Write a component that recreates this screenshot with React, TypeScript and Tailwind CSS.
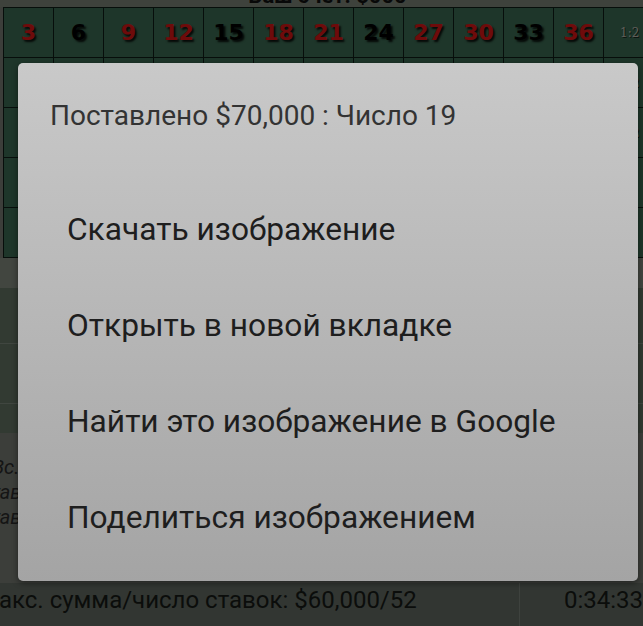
import React from "react";

const topRow = [3, 6, 9, 12, 15, 18, 21, 24, 27, 30, 33, 36];
const midRow = topRow.map((n) => n - 1);
const lowRow = topRow.map((n) => n - 2);
const reds = new Set([1, 3, 5, 7, 9, 12, 14, 16, 18, 19, 21, 23, 25, 27, 30, 32, 34, 36]);

const menuItems = [
  "Скачать изображение",
  "Открыть в новой вкладке",
  "Найти это изображение в Google",
  "Поделиться изображением",
];

function NumberCell({ n }: { n: number }) {
  return (
    <div
      className={
        "flex items-center justify-center border-b border-r border-[#0e1d16] font-['DejaVu_Sans',sans-serif] text-[22px] font-bold [text-shadow:2px_2px_2px_rgba(0,0,0,0.85)] " +
        (reds.has(n) ? "text-[#dc1616]" : "text-black")
      }
    >
      {n}
    </div>
  );
}

function ColumnBet() {
  return (
    <div className="flex items-center justify-start border-b border-r border-[#0e1d16] pl-[16px] font-['DejaVu_Serif',serif] text-[12px] text-[#bcbcb2] [text-shadow:1px_1px_0_rgba(0,0,0,0.6)]">
      1:2
    </div>
  );
}

function OutsideCell({ label, span }: { label: string; span: "col-span-4" | "col-span-2" }) {
  return (
    <div
      className={
        span +
        " flex items-center justify-center border-b border-r border-[#0e1d16] font-['DejaVu_Sans',sans-serif] text-[18px] font-bold text-white [text-shadow:1px_1px_1px_rgba(0,0,0,0.9)]"
      }
    >
      {label}
    </div>
  );
}

function Board() {
  return (
    <div className="ml-[3px] grid w-max grid-cols-[repeat(13,50px)] grid-rows-[repeat(5,50px)] border-l border-t border-[#0e1d16] bg-[#3c6c54]">
      {topRow.map((n) => (
        <NumberCell key={n} n={n} />
      ))}
      <ColumnBet />
      {midRow.map((n) => (
        <NumberCell key={n} n={n} />
      ))}
      <ColumnBet />
      {lowRow.map((n) => (
        <NumberCell key={n} n={n} />
      ))}
      <ColumnBet />
      <OutsideCell label="1st 12" span="col-span-4" />
      <OutsideCell label="2nd 12" span="col-span-4" />
      <OutsideCell label="3rd 12" span="col-span-4" />
      <div className="border-b border-r border-[#0e1d16]" />
      <OutsideCell label="1-18" span="col-span-2" />
      <OutsideCell label="EVEN" span="col-span-2" />
      <OutsideCell label="RED" span="col-span-2" />
      <OutsideCell label="BLACK" span="col-span-2" />
      <OutsideCell label="ODD" span="col-span-2" />
      <OutsideCell label="19-36" span="col-span-2" />
      <div className="border-b border-r border-[#0e1d16]" />
    </div>
  );
}

export default function App() {
  return (
    <div className="relative h-[626px] w-[643px] overflow-hidden bg-[#787c74] font-['Roboto','Noto_Sans',sans-serif]">
      {/* balance line, scrolled mostly out of view */}
      <div className="flex h-[7px] items-end justify-center overflow-hidden bg-[#7c8478] pl-[12px]">
        <span className="text-[22px] font-bold leading-none text-[#111]">Ваш счёт: $000</span>
      </div>

      <Board />

      <div className="h-[30px] bg-[#848c80]" />

      <div className="bg-[#647464]">
        <div className="h-[56px] border-b border-[#808c80]" />
        <div className="h-[60px] border-b border-[#808c80]" />
        <div className="h-[29px]" />
      </div>

      <div className="h-[150px] pt-[22px] text-[20px] italic leading-[25px] text-[#2a2a2a]">
        <div className="-ml-[8px]">Вс. ставки: $70,000</div>
        <div className="-ml-[22px]">Ставка: $10,000</div>
        <div className="-ml-[22px]">Ставка: $60,000</div>
      </div>

      <div className="flex h-[43px] items-start bg-[#646c64] text-[24px] leading-[34px] text-[#161a16]">
        <div className="-ml-[22px] flex h-full flex-1 items-start whitespace-nowrap border-r border-[#7c847c]">
          Макс. сумма/число ставок: $60,000/52
        </div>
        <div className="w-[123px] text-right">0:34:33</div>
      </div>

      {/* context menu */}
      <div className="absolute inset-0 bg-black/50">
        <div className="absolute left-[18px] top-[63px] flex h-[518px] w-[620px] flex-col rounded-[5px] bg-linear-to-b from-[#c9c9c9] to-[#a4a4a4] shadow-[0_2px_6px_rgba(0,0,0,0.45)]">
          <div className="pl-[32px] pt-[38px] text-[28px] leading-[30px] text-[#333333]">
            Поставлено $70,000 : Число 19
          </div>
          <ul className="mt-[51px]">
            {menuItems.map((item) => (
              <li key={item} className="flex h-[96px] items-center pl-[49px] text-[31.7px] text-[#1e1e1e]">
                {item}
              </li>
            ))}
          </ul>
        </div>
      </div>
    </div>
  );
}
